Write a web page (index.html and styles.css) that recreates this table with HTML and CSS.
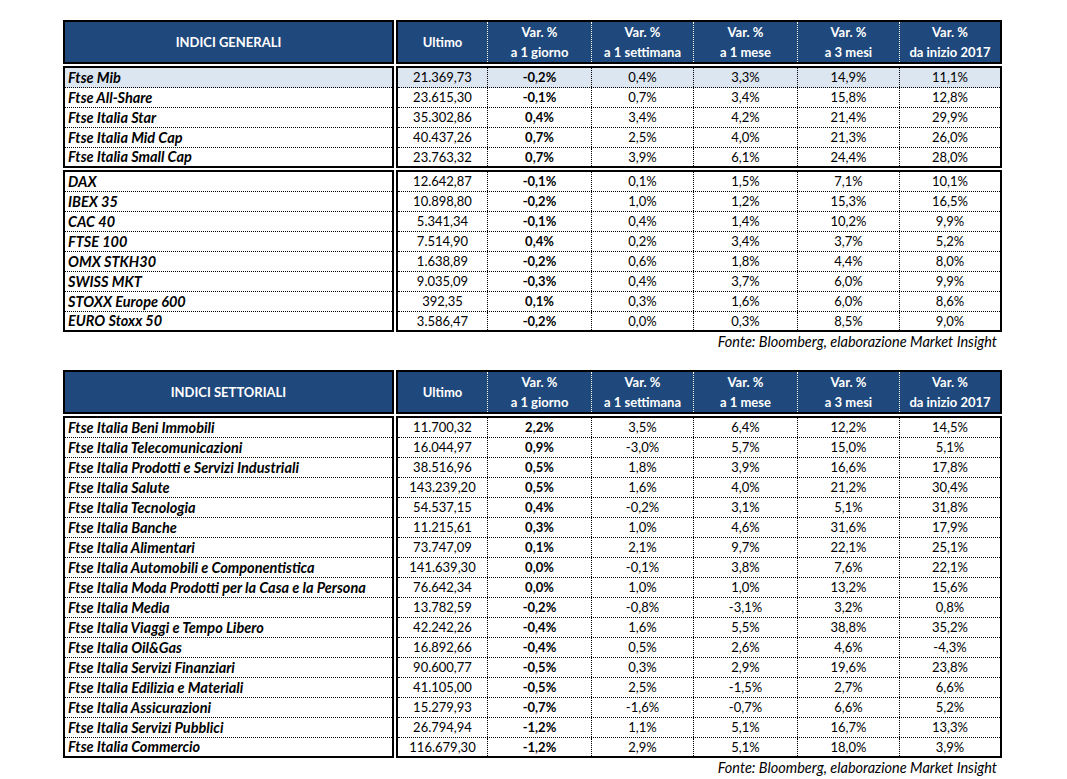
FILE: index.html
```html
<!DOCTYPE html>
<html lang="it">
<head>
<meta charset="utf-8">
<title>Indici</title>
<link rel="stylesheet" href="styles.css">
</head>
<body>
<div class="page">

  <section class="tbl">
    <div class="band head">
      <div class="box names"><div class="hcell">INDICI GENERALI</div></div>
      <div class="box vals">
        <div class="vrow hrow">
          <div class="hcell">Ultimo</div>
          <div class="hcell">Var. %<br>a 1 giorno</div>
          <div class="hcell">Var. %<br>a 1 settimana</div>
          <div class="hcell">Var. %<br>a 1 mese</div>
          <div class="hcell">Var. %<br>a 3 mesi</div>
          <div class="hcell">Var. %<br>da inizio 2017</div>
        </div>
      </div>
    </div>

    <div class="band group">
      <div class="box names">
        <div class="row hl">Ftse Mib</div>
        <div class="row">Ftse All-Share</div>
        <div class="row">Ftse Italia Star</div>
        <div class="row">Ftse Italia Mid Cap</div>
        <div class="row">Ftse Italia Small Cap</div>
      </div>
      <div class="box vals">
        <div class="vrow row hl"><span>21.369,73</span><b>-0,2%</b><span>0,4%</span><span>3,3%</span><span>14,9%</span><span>11,1%</span></div>
        <div class="vrow row"><span>23.615,30</span><b>-0,1%</b><span>0,7%</span><span>3,4%</span><span>15,8%</span><span>12,8%</span></div>
        <div class="vrow row"><span>35.302,86</span><b>0,4%</b><span>3,4%</span><span>4,2%</span><span>21,4%</span><span>29,9%</span></div>
        <div class="vrow row"><span>40.437,26</span><b>0,7%</b><span>2,5%</span><span>4,0%</span><span>21,3%</span><span>26,0%</span></div>
        <div class="vrow row"><span>23.763,32</span><b>0,7%</b><span>3,9%</span><span>6,1%</span><span>24,4%</span><span>28,0%</span></div>
      </div>
    </div>

    <div class="band group">
      <div class="box names">
        <div class="row">DAX</div>
        <div class="row">IBEX 35</div>
        <div class="row">CAC 40</div>
        <div class="row">FTSE 100</div>
        <div class="row">OMX STKH30</div>
        <div class="row">SWISS MKT</div>
        <div class="row">STOXX Europe 600</div>
        <div class="row">EURO Stoxx 50</div>
      </div>
      <div class="box vals">
        <div class="vrow row"><span>12.642,87</span><b>-0,1%</b><span>0,1%</span><span>1,5%</span><span>7,1%</span><span>10,1%</span></div>
        <div class="vrow row"><span>10.898,80</span><b>-0,2%</b><span>1,0%</span><span>1,2%</span><span>15,3%</span><span>16,5%</span></div>
        <div class="vrow row"><span>5.341,34</span><b>-0,1%</b><span>0,4%</span><span>1,4%</span><span>10,2%</span><span>9,9%</span></div>
        <div class="vrow row"><span>7.514,90</span><b>0,4%</b><span>0,2%</span><span>3,4%</span><span>3,7%</span><span>5,2%</span></div>
        <div class="vrow row"><span>1.638,89</span><b>-0,2%</b><span>0,6%</span><span>1,8%</span><span>4,4%</span><span>8,0%</span></div>
        <div class="vrow row"><span>9.035,09</span><b>-0,3%</b><span>0,4%</span><span>3,7%</span><span>6,0%</span><span>9,9%</span></div>
        <div class="vrow row"><span>392,35</span><b>0,1%</b><span>0,3%</span><span>1,6%</span><span>6,0%</span><span>8,6%</span></div>
        <div class="vrow row"><span>3.586,47</span><b>-0,2%</b><span>0,0%</span><span>0,3%</span><span>8,5%</span><span>9,0%</span></div>
      </div>
    </div>
  </section>
  <p class="source">Fonte: Bloomberg, elaborazione Market Insight</p>

  <section class="tbl second">
    <div class="band head">
      <div class="box names"><div class="hcell">INDICI SETTORIALI</div></div>
      <div class="box vals">
        <div class="vrow hrow">
          <div class="hcell">Ultimo</div>
          <div class="hcell">Var. %<br>a 1 giorno</div>
          <div class="hcell">Var. %<br>a 1 settimana</div>
          <div class="hcell">Var. %<br>a 1 mese</div>
          <div class="hcell">Var. %<br>a 3 mesi</div>
          <div class="hcell">Var. %<br>da inizio 2017</div>
        </div>
      </div>
    </div>

    <div class="band group">
      <div class="box names">
        <div class="row">Ftse Italia Beni Immobili</div>
        <div class="row">Ftse Italia Telecomunicazioni</div>
        <div class="row">Ftse Italia Prodotti e Servizi Industriali</div>
        <div class="row">Ftse Italia Salute</div>
        <div class="row">Ftse Italia Tecnologia</div>
        <div class="row">Ftse Italia Banche</div>
        <div class="row">Ftse Italia Alimentari</div>
        <div class="row">Ftse Italia Automobili e Componentistica</div>
        <div class="row">Ftse Italia Moda Prodotti per la Casa e la Persona</div>
        <div class="row">Ftse Italia Media</div>
        <div class="row">Ftse Italia Viaggi e Tempo Libero</div>
        <div class="row">Ftse Italia Oil&amp;Gas</div>
        <div class="row">Ftse Italia Servizi Finanziari</div>
        <div class="row">Ftse Italia Edilizia e Materiali</div>
        <div class="row">Ftse Italia Assicurazioni</div>
        <div class="row">Ftse Italia Servizi Pubblici</div>
        <div class="row">Ftse Italia Commercio</div>
      </div>
      <div class="box vals">
        <div class="vrow row"><span>11.700,32</span><b>2,2%</b><span>3,5%</span><span>6,4%</span><span>12,2%</span><span>14,5%</span></div>
        <div class="vrow row"><span>16.044,97</span><b>0,9%</b><span>-3,0%</span><span>5,7%</span><span>15,0%</span><span>5,1%</span></div>
        <div class="vrow row"><span>38.516,96</span><b>0,5%</b><span>1,8%</span><span>3,9%</span><span>16,6%</span><span>17,8%</span></div>
        <div class="vrow row"><span>143.239,20</span><b>0,5%</b><span>1,6%</span><span>4,0%</span><span>21,2%</span><span>30,4%</span></div>
        <div class="vrow row"><span>54.537,15</span><b>0,4%</b><span>-0,2%</span><span>3,1%</span><span>5,1%</span><span>31,8%</span></div>
        <div class="vrow row"><span>11.215,61</span><b>0,3%</b><span>1,0%</span><span>4,6%</span><span>31,6%</span><span>17,9%</span></div>
        <div class="vrow row"><span>73.747,09</span><b>0,1%</b><span>2,1%</span><span>9,7%</span><span>22,1%</span><span>25,1%</span></div>
        <div class="vrow row"><span>141.639,30</span><b>0,0%</b><span>-0,1%</span><span>3,8%</span><span>7,6%</span><span>22,1%</span></div>
        <div class="vrow row"><span>76.642,34</span><b>0,0%</b><span>1,0%</span><span>1,0%</span><span>13,2%</span><span>15,6%</span></div>
        <div class="vrow row"><span>13.782,59</span><b>-0,2%</b><span>-0,8%</span><span>-3,1%</span><span>3,2%</span><span>0,8%</span></div>
        <div class="vrow row"><span>42.242,26</span><b>-0,4%</b><span>1,6%</span><span>5,5%</span><span>38,8%</span><span>35,2%</span></div>
        <div class="vrow row"><span>16.892,66</span><b>-0,4%</b><span>0,5%</span><span>2,6%</span><span>4,6%</span><span>-4,3%</span></div>
        <div class="vrow row"><span>90.600,77</span><b>-0,5%</b><span>0,3%</span><span>2,9%</span><span>19,6%</span><span>23,8%</span></div>
        <div class="vrow row"><span>41.105,00</span><b>-0,5%</b><span>2,5%</span><span>-1,5%</span><span>2,7%</span><span>6,6%</span></div>
        <div class="vrow row"><span>15.279,93</span><b>-0,7%</b><span>-1,6%</span><span>-0,7%</span><span>6,6%</span><span>5,2%</span></div>
        <div class="vrow row"><span>26.794,94</span><b>-1,2%</b><span>1,1%</span><span>5,1%</span><span>16,7%</span><span>13,3%</span></div>
        <div class="vrow row"><span>116.679,30</span><b>-1,2%</b><span>2,9%</span><span>5,1%</span><span>18,0%</span><span>3,9%</span></div>
      </div>
    </div>
  </section>
  <p class="source">Fonte: Bloomberg, elaborazione Market Insight</p>

</div>
</body>
</html>
```

FILE: styles.css
```css
* { box-sizing: border-box; }

html, body {
  margin: 0;
  padding: 0;
  background: #ffffff;
}

body {
  font-family: Lato, "Open Sans", sans-serif;
  font-size: 13px;
  color: #000000;
}

.page {
  width: 939px;
  margin-left: 63px;
  padding-top: 20px;
}

.tbl {
  display: flex;
  flex-direction: column;
  gap: 2px;
}

.tbl.second {
  margin-top: 18px;
}

.band {
  display: flex;
  gap: 2px;
}

.box {
  border: 2px solid #000000;
}

.names {
  width: 331px;
  flex: none;
}

.vals {
  width: 606px;
  flex: none;
}

/* header */
.head .box {
  height: 44px;
  background: #1f497d;
  color: #ffffff;
  font-weight: 700;
}

.head .names {
  display: flex;
  align-items: center;
  justify-content: center;
}

.hcell {
  display: flex;
  align-items: center;
  justify-content: center;
  text-align: center;
  line-height: 20px;
  height: 100%;
}

.hrow {
  height: 100%;
}

/* body rows */
.row {
  height: 20px;
  line-height: 19px;
  border-bottom: 1px dotted #000000;
}

.row:last-child {
  height: 18px;
  line-height: 18px;
  border-bottom: none;
}

.names .row {
  font-weight: 700;
  font-style: italic;
  font-size: 14.5px;
  padding-left: 3px;
  white-space: nowrap;
}

.hl {
  background: #dce6f1;
}

.vrow {
  display: grid;
  grid-template-columns: 89px 104px 102px 104px 102px 1fr;
}

.vrow > span,
.vrow > b {
  text-align: center;
  white-space: nowrap;
}

.vrow > * + * {
  border-left: 1px dotted #000000;
}

.hrow > * + * {
  border-left-color: #ffffff;
}

.vrow > b {
  font-weight: 700;
}

.source {
  margin: 0;
  width: 939px;
  height: 20px;
  line-height: 20px;
  text-align: right;
  padding-right: 5px;
  font-style: italic;
  font-size: 14.5px;
}
```
